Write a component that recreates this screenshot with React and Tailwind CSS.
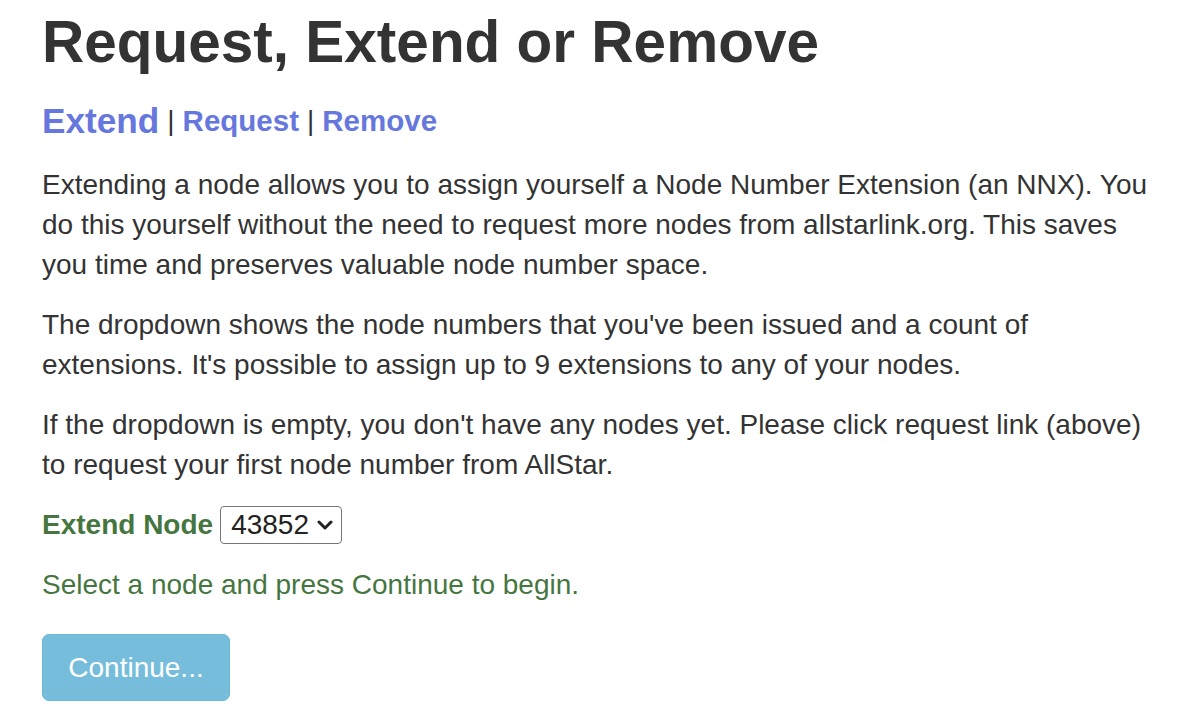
export default function App() {
  return (
    <div
      className="min-h-[710px] bg-white pl-[42px] pr-[30px] text-[#333333]"
      style={{ fontFamily: '"Liberation Sans", Arial, Helvetica, sans-serif' }}
    >
      <h1 className="pt-[10px] text-[58.5px] font-bold leading-[64px] text-[#333333]">
        Request, Extend or Remove
      </h1>
      <div className="mt-[27px] flex h-[40px] items-center gap-[8px] leading-[40px]">
        <a className="text-[35.2px] font-bold text-[#6677dd]">Extend</a>
        <span className="text-[28px] text-[#333333]">|</span>
        <a className="text-[29.5px] font-bold text-[#6677dd]">Request</a>
        <span className="text-[28px] text-[#333333]">|</span>
        <a className="text-[29.5px] font-bold text-[#6677dd]">Remove</a>
      </div>
      <div className="mt-[24px] text-[28px] leading-[40px]">
        <p className="mb-[20px]">
          Extending a node allows you to assign yourself a Node Number Extension (an NNX). You do this
          yourself without the need to request more nodes from allstarlink.org. This saves you time and
          preserves valuable node number space.
        </p>
        <p className="mb-[20px]">
          The dropdown shows the node numbers that you've been issued and a count of extensions. It's
          possible to assign up to 9 extensions to any of your nodes.
        </p>
        <p className="mb-[20px]">
          If the dropdown is empty, you don't have any nodes yet. Please click request link (above) to
          request your first node number from AllStar.
        </p>
        <div className="mb-[20px] flex h-[40px] items-center gap-[7px]">
          <span className="font-bold text-[#46763f]">Extend Node</span>
          <div className="flex h-[38px] w-[122px] items-center justify-between rounded-[4px] border border-[#767676] pl-[10px] pr-[8px] text-[#222222]">
            <span>43852</span>
            <svg width="16" height="12" viewBox="0 0 16 12">
              <path d="M2 3 L8 9 L14 3" fill="none" stroke="#222" strokeWidth="3" strokeLinecap="round" strokeLinejoin="round" />
            </svg>
          </div>
        </div>
        <p className="mb-[29px] text-[#46763f]">Select a node and press Continue to begin.</p>
        <button className="flex h-[67px] w-[188px] items-center justify-center rounded-[7px] border border-[#6cb6d8] bg-[#76bddb] text-[28px] text-white">
          Continue...
        </button>
      </div>
    </div>
  );
}
